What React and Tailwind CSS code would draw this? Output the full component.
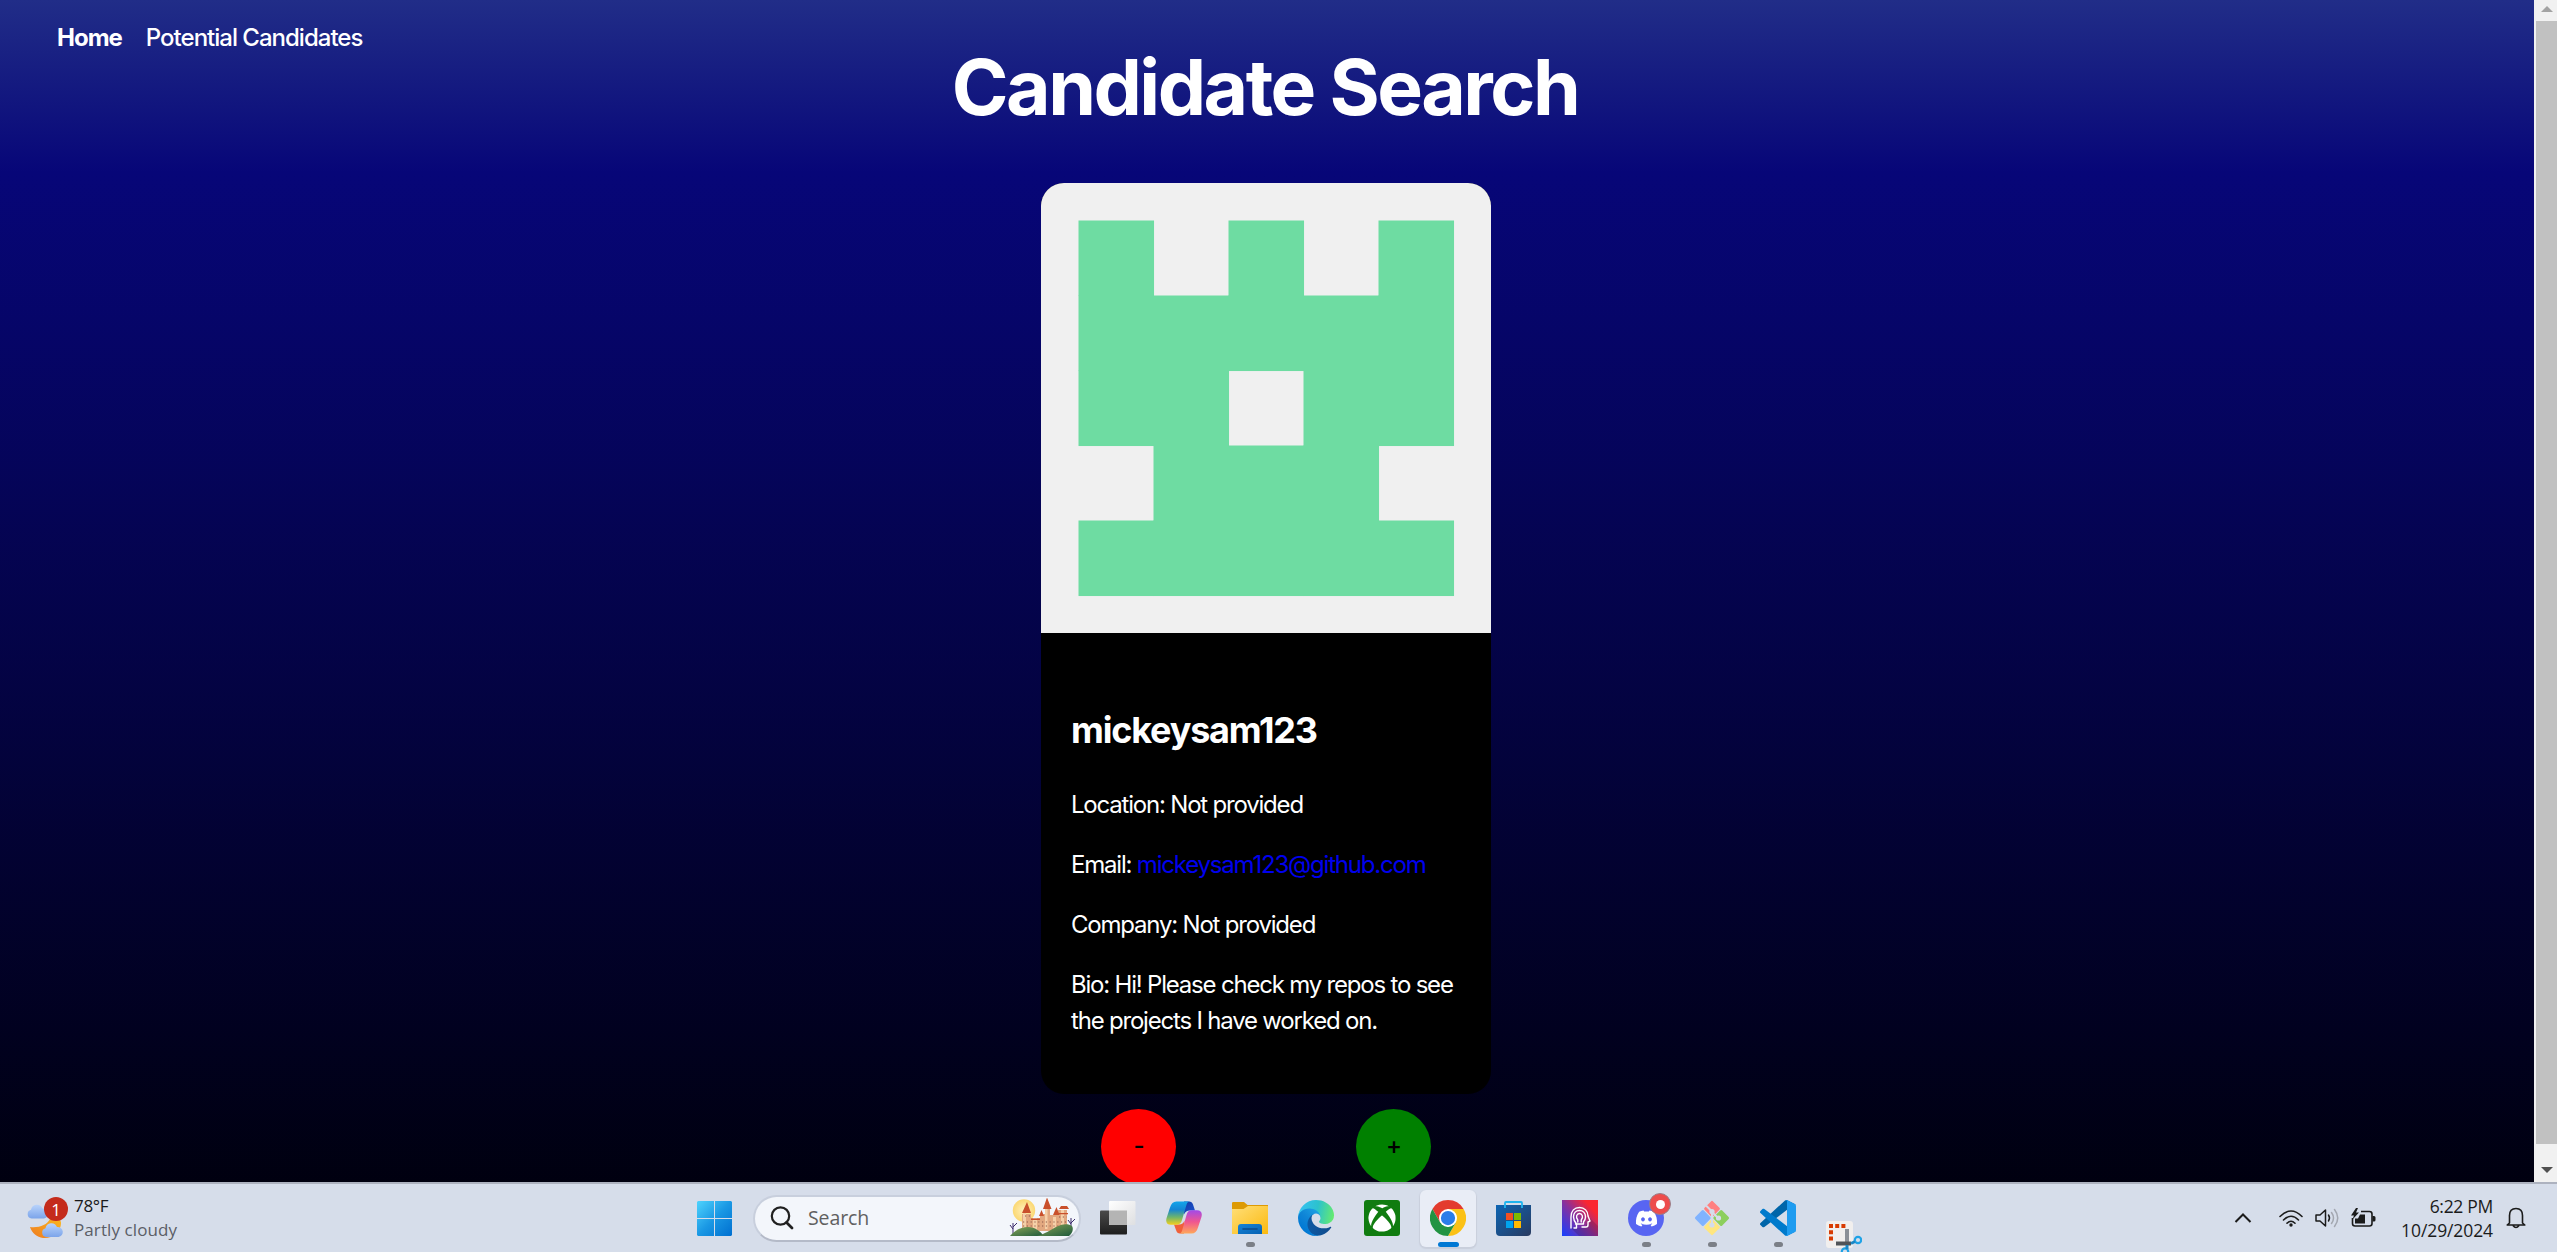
import React from "react";
import { FaXbox, FaDiscord } from "react-icons/fa";

const AVATAR_ROWS = ["10101", "11111", "11011", "01110", "11111"];

function Avatar() {
  return (
    <svg viewBox="0 0 420 420" className="block size-[450px] bg-[#f0f0f0]">
      {AVATAR_ROWS.map((row, y) =>
        [...row].map((c, x) =>
          c === "1" ? (
            <rect key={`${x}${y}`} x={35 + x * 70} y={35 + y * 70} width="70.500" height="70.500" fill="#6edca2" />
          ) : null
        )
      )}
    </svg>
  );
}

function StartIcon() {
  return (
    <svg viewBox="0 0 35 35" className="size-[35px]">
      <defs>
        <linearGradient id="win" x1="0" y1="0" x2="35" y2="35" gradientUnits="userSpaceOnUse">
          <stop offset="0" stopColor="#4fd3fd" />
          <stop offset=".5" stopColor="#1a98e4" />
          <stop offset="1" stopColor="#006fd0" />
        </linearGradient>
      </defs>
      <path fill="url(#win)" d="M1 0H17V17H0V1ZM18 0H34L35 1V17H18ZM0 18H17V35H1L0 34ZM18 18H35V34L34 35H18Z" />
    </svg>
  );
}

function Castle() {
  return (
    <svg viewBox="0 0 66 40" className="h-10 w-[66px]">
      <defs>
        <radialGradient id="sun">
          <stop offset="0" stopColor="#fff0bd" />
          <stop offset="1" stopColor="#fbd873" />
        </radialGradient>
        <linearGradient id="hill" x1="0" y1="0" x2="1" y2="1">
          <stop offset="0" stopColor="#8aa556" />
          <stop offset="1" stopColor="#1e5a3c" />
        </linearGradient>
      </defs>
      <circle cx="15" cy="12.500" r="11.200" fill="url(#sun)" />
      <path fill="#e2a880" d="M13 16h9v4h9v-4h5V10h5v7h8v-5h9v21H13z" />
      <path fill="#f5d0a8" d="M14 14h3v18h-3zM36 11h2.500v20H36zM52 12h3v20h-3zM24 20h4v12h-4zM44 19h3v12h-3z" />
      <path fill="#c9502c" d="M13 15 18 4l4 11zM34 11 38-.500l4.500 11.500zM30 18l2.500-6 2.500 6zM44 17l3.500-8 3 8zM50 11l2-3h6l2 3zM22 20.500h9v1.500h-9zM49 15h10v1.300H49z" />
      <path stroke="#8c5a4a" strokeWidth="1.200" strokeDasharray="1.200 2.600" d="M14 24h44M14 28h44M16 18h5M50 19h8" />
      <path stroke="#3b2a6b" strokeWidth="1" fill="none" d="M4 37V25M4 31 1 27M4 29l4-4M62 31V20M62 26l-3-4M62 25l4-4" />
      <path fill="url(#hill)" d="M1 38c5-6 11-9 18-9 7 0 12 4 16 9z" />
      <path fill="url(#hill)" d="M28 38c8-2 13-6 19-9 5-3 12-4 16-1 2 3 0 8-3 10z" />
    </svg>
  );
}

function TaskView() {
  return (
    <svg viewBox="0 0 36 36" className="size-9">
      <defs>
        <linearGradient id="tvd" x1="0" y1="0" x2="0" y2="1">
          <stop offset="0" stopColor="#4a4a4a" />
          <stop offset="1" stopColor="#1e1e1e" />
        </linearGradient>
        <linearGradient id="tvl" x1="0" y1="0" x2="1" y2="1">
          <stop offset="0" stopColor="#fff" />
          <stop offset="1" stopColor="#dedfe1" />
        </linearGradient>
      </defs>
      <rect x="0" y="10.500" width="27" height="24" rx="1" fill="url(#tvd)" />
      <rect x="9" y="1" width="26.500" height="24" rx="1" fill="url(#tvl)" />
      <path fill="#b4b4b4" d="M9 10.500H27V25H10L9 24Z" />
    </svg>
  );
}

function Copilot() {
  return (
    <svg viewBox="0 0 36 36" className="size-9">
      <defs>
        <linearGradient id="cpa" x1="0" y1="0" x2="0" y2="1">
          <stop offset="0" stopColor="#12a5ea" />
          <stop offset=".35" stopColor="#1585d4" />
          <stop offset=".68" stopColor="#6fb56b" />
          <stop offset="1" stopColor="#f4cf1c" />
        </linearGradient>
        <linearGradient id="cpb" x1="0" y1="0" x2="0" y2="1">
          <stop offset="0" stopColor="#a24ae8" />
          <stop offset=".5" stopColor="#f0568f" />
          <stop offset="1" stopColor="#ffa75a" />
        </linearGradient>
        <linearGradient id="cpc" x1="0" y1="0" x2="1" y2="1">
          <stop offset="0" stopColor="#123aa5" />
          <stop offset="1" stopColor="#1c54d2" />
        </linearGradient>
      </defs>
      <path fill="url(#cpc)" d="M18 1.500h5c2 0 3.400 1 4 3l2 6h-5c-3 0-5 1.500-6 4z" />
      <path fill="#f0603a" d="M18 33.500h-4c-2 0-3.300-1-4-3.500l-2-5.500h5c3 0 4.500-1.500 5.500-4z" />
      <path fill="url(#cpa)" d="M10.500 1.500H24c-1.800 0-2.800 1-3.500 3.300L16 20c-1 3.300-2.600 4.700-5.500 4.700H5c-4 0-5.500-2.500-4.500-6.500L4 7.500C5.200 3.500 7.200 1.500 10.500 1.500Z" />
      <path fill="url(#cpb)" d="M25.500 33.500H13c1.800 0 2.500-1 3.200-3.300L20.500 15c1-3.300 2.600-4.700 5.500-4.700h5c4 0 5.500 2.500 4.500 6.500L32 27.500c-1.200 4-3.200 6-6.500 6Z" />
    </svg>
  );
}

function Explorer() {
  return (
    <svg viewBox="0 0 36 36" className="size-9">
      <defs>
        <linearGradient id="fo" x1="0" y1="0" x2="1" y2="1">
          <stop offset="0" stopColor="#ffdf79" />
          <stop offset="1" stopColor="#fbb90e" />
        </linearGradient>
        <linearGradient id="fb" x1="0" y1="0" x2="1" y2="1">
          <stop offset="0" stopColor="#1683d8" />
          <stop offset="1" stopColor="#0762b3" />
        </linearGradient>
      </defs>
      <path fill="#dd9a04" d="M0 3.200Q0 2 1.200 2H12l3.500 3H36v5H0Z" />
      <path fill="url(#fo)" d="M0 9h11.500L16 6h19.500l.5.500V34H0Z" />
      <path fill="url(#fb)" d="M6 34v-7q0-3 3-3h18q3 0 3 3v7Z" />
      <path stroke="#0b4a8c" strokeWidth="1.600" strokeLinecap="round" d="M11 29h14" />
    </svg>
  );
}

function Edge() {
  return (
    <svg viewBox="0 0 256 256" className="size-9">
      <defs>
        <linearGradient id="e1" x1="63" y1="177" x2="241" y2="177" gradientUnits="userSpaceOnUse">
          <stop offset="0" stopColor="#0c59a4" />
          <stop offset="1" stopColor="#114a8b" />
        </linearGradient>
        <linearGradient id="e2" x1="157" y1="101" x2="46" y2="222" gradientUnits="userSpaceOnUse">
          <stop offset="0" stopColor="#1b9de2" />
          <stop offset=".5" stopColor="#0f85d6" />
          <stop offset="1" stopColor="#0078d4" />
        </linearGradient>
        <linearGradient id="e3" x1="10" y1="60" x2="256" y2="110" gradientUnits="userSpaceOnUse">
          <stop offset="0" stopColor="#35c1f1" />
          <stop offset=".5" stopColor="#2cc2cd" />
          <stop offset="1" stopColor="#66eb6e" />
        </linearGradient>
      </defs>
      <path fill="url(#e1)" d="M231.070 190.540a93.400 93.400 0 0 1-10.540 4.710 101.870 101.870 0 0 1-35.900 6.460c-47.320 0-88.540-32.550-88.540-74.320A31.480 31.480 0 0 1 112.560 99.780c-42.800 1.800-53.800 46.400-53.800 72.530 0 73.880 68.090 81.370 82.760 81.370 7.910 0 19.840-2.300 27-4.560l1.310-.44a128.340 128.340 0 0 0 66.600-52.800 4 4 0 0 0-5.360-5.340z" />
      <path fill="url(#e2)" d="M105.730 241.420a79.200 79.200 0 0 1-22.740-21.340 80.720 80.720 0 0 1 29.530-120.350c3.120-1.470 8.450-4.130 15.540-4a32.350 32.350 0 0 1 25.690 13 31.880 31.880 0 0 1 6.360 18.660c0-.21 24.460-79.600-80-79.600-43.900 0-80 41.660-80 78.210a130.150 130.150 0 0 0 12.110 56 128 128 0 0 0 156.380 67.110 75.550 75.550 0 0 1-62.780-8z" />
      <path fill="url(#e3)" d="M152.330 148.860c-.81 1.050-3.300 2.500-3.300 5.660 0 2.610 1.700 5.120 4.720 7.230 14.380 10 41.490 8.680 41.560 8.680a59.560 59.560 0 0 0 30.270-8.350 61.380 61.380 0 0 0 30.430-52.880c.26-22.410-8-37.310-11.340-43.910C223.460 23.840 177.720 0 128 0A128 128 0 0 0 0 126.200c.48-36.540 36.800-66.050 80-66.050 3.500 0 23.460.34 42 10.070 16.340 8.580 24.900 18.940 30.850 29.210 6.180 10.670 7.280 24.150 7.280 29.520 0 5.370-2.730 13.330-7.800 19.910z" />
    </svg>
  );
}

function Xbox() {
  return (
    <span className="flex size-9 items-center justify-center rounded-[3px] bg-[#107c10]">
      <FaXbox className="size-7 text-white" />
    </span>
  );
}

function Chrome() {
  return (
    <svg viewBox="0 0 48 48" className="size-9">
      <path fill="#e33b2e" d="M24 0A24 24 0 0 0 3.215 12L13.600 30 24 12H44.785A24 24 0 0 0 24 0Z" />
      <path fill="#fbc116" d="M44.785 12A24 24 0 0 1 24 48L34.400 30 34.400 18 24 12Z" />
      <path fill="#229342" d="M3.215 12A24 24 0 0 0 24 48L34.392 30 24 36 13.608 30Z" />
      <circle cx="24" cy="24" r="12" fill="#fff" />
      <circle cx="24" cy="24" r="9.500" fill="#2a7de9" />
    </svg>
  );
}

function Store() {
  return (
    <svg viewBox="0 0 36 36" className="size-9">
      <defs>
        <linearGradient id="st" x1="0" y1="0" x2="1" y2="1">
          <stop offset="0" stopColor="#0d65b3" />
          <stop offset="1" stopColor="#293a60" />
        </linearGradient>
      </defs>
      <path fill="url(#st)" d="M0 5h35v27q0 4-4 4H4q-4 0-4-4Z" />
      <path fill="none" stroke="#1fb4ee" strokeWidth="1.800" d="M9 8V3q0-1 1-1h15q1 0 1 1v5" />
      <path fill="#f25022" d="M10 13h7v7h-7z" />
      <path fill="#7fba00" d="M18 13h7v7h-7z" />
      <path fill="#00a4ef" d="M10 21h7v7h-7z" />
      <path fill="#ffb900" d="M18 21h7v7h-7z" />
    </svg>
  );
}

function HeadApp() {
  return (
    <svg viewBox="0 0 36 36" className="size-9">
      <defs>
        <linearGradient id="ha" x1="0" y1="36" x2="36" y2="4" gradientUnits="userSpaceOnUse">
          <stop offset="0" stopColor="#1440ff" />
          <stop offset=".5" stopColor="#8a2f9c" />
          <stop offset=".85" stopColor="#fb2630" />
        </linearGradient>
      </defs>
      <path fill="url(#ha)" d="M0 0h36v36H0z" />
      <path fill="#000" opacity=".14" d="M9 28 17 36h19V26l-9-9-4 11z" />
      <g fill="none" stroke="#fff" strokeWidth="1.400" strokeLinejoin="round" strokeLinecap="round">
        <path d="M9 28V17C9 11 12.500 7.500 17.500 7.500S26 11 26 16l2 5-2 1v3q0 2-2 2h-4" />
        <path d="M12 28h2.500v-4C12 21 11.500 18.500 11.500 17c0-4 2.500-6.500 6-6.500s6 2.500 6 6.500c0 2-.800 3.500-2 5v2h-8" />
        <path d="M15.800 22v-2c-2.500-3-1-6.500 1.700-6.500s4.200 3.500 1.700 6.500v2" />
      </g>
    </svg>
  );
}

function Discord() {
  return (
    <span className="relative flex size-9 items-center justify-center rounded-full bg-[#5865f2]">
      <FaDiscord className="size-[23px] text-white" />
      <span className="absolute -top-[7px] left-[21px] flex size-[22px] items-center justify-center rounded-full border border-[#9a7f8a] bg-[#ed4d4d]">
        <span className="size-[9px] rounded-full bg-white" />
      </span>
    </span>
  );
}

function Git() {
  return (
    <svg viewBox="0 0 36 36" className="size-9">
      <g transform="rotate(45 18 18)">
        <rect x="5.500" y="5.500" width="12" height="12" rx="1.500" fill="#ff8080" />
        <rect x="18.500" y="5.500" width="12" height="12" rx="1.500" fill="#8ccf5d" />
        <rect x="5.500" y="18.500" width="12" height="12" rx="1.500" fill="#80b3ff" />
        <rect x="18.500" y="18.500" width="12" height="12" rx="1.500" fill="#ffe680" />
      </g>
      <path d="M12 5.500 18 11.500V25M18 12l6 6" stroke="#d5dce9" strokeWidth="2" fill="none" />
      <circle cx="18" cy="11.500" r="2.600" fill="#d5dce9" />
      <circle cx="18" cy="25" r="2.600" fill="#d5dce9" />
      <circle cx="24.500" cy="18" r="2.600" fill="#d5dce9" />
    </svg>
  );
}

function VsCode() {
  return (
    <svg viewBox="0 0 100 100" className="size-9">
      <path fill="#0065a9" d="M96.461 10.796 75.857.876C73.472-.273 70.622.212 68.750 2.083L1.299 63.583c-1.815 1.654-1.812 4.511.004 6.162l5.510 5.009c1.485 1.350 3.722 1.450 5.321.237L93.361 13.370C96.086 11.303 100 13.246 100 16.667v-.24c0-2.400-1.375-4.589-3.539-5.631Z" />
      <path fill="#007acc" d="m96.461 89.204-20.604 9.920c-2.385 1.149-5.235.664-7.107-1.207L1.299 36.417c-1.815-1.654-1.812-4.511.004-6.162l5.510-5.009c1.485-1.350 3.722-1.450 5.321-.237L93.361 86.630C96.086 88.697 100 86.754 100 83.333v.24c0 2.400-1.375 4.589-3.539 5.631Z" />
      <path fill="#1f9cf0" d="M75.858 99.126c-2.386 1.148-5.236.662-7.108-1.210C71.056 100.223 75 98.590 75 95.328V4.672c0-3.262-3.944-4.895-6.250-2.589C70.622.211 73.472-.274 75.858.874l20.600 9.907C98.623 11.822 100 14.011 100 16.413v67.174c0 2.402-1.377 4.592-3.541 5.633l-20.601 9.906Z" />
    </svg>
  );
}

function Snip() {
  return (
    <svg viewBox="0 0 36 31" className="h-[31px] w-9">
      <rect x="0" y="0" width="27" height="27" rx="3" fill="#f1efee" />
      <path fill="none" stroke="#d83b01" strokeWidth="4" strokeDasharray="4 2.200" d="M3 5H20" />
      <path fill="none" stroke="#d83b01" strokeWidth="4" strokeDasharray="4 2.200" d="M5 9.200V20" />
      <path stroke="#8b9097" strokeWidth="4" d="M21 8V22" />
      <path stroke="#505459" strokeWidth="4" d="M10 22.500H25" />
      <circle cx="32" cy="19" r="3.200" fill="none" stroke="#1fa2e6" strokeWidth="2.200" />
      <circle cx="19" cy="30.500" r="3.200" fill="none" stroke="#1fa2e6" strokeWidth="2.200" />
      <path stroke="#1b86c4" strokeWidth="3" d="M25 22.500l4-2M21 24v4" />
    </svg>
  );
}

const APPS = [
  { icon: TaskView },
  { icon: Copilot },
  { icon: Explorer, mark: "open" },
  { icon: Edge },
  { icon: Xbox },
  { icon: Chrome, mark: "active" },
  { icon: Store },
  { icon: HeadApp },
  { icon: Discord, mark: "open" },
  { icon: Git, mark: "open" },
  { icon: VsCode, mark: "open" },
];

function AppButton({ icon: Icon, mark }) {
  return (
    <div className="flex w-[66px] shrink-0 justify-center">
      <div
        className={
          mark === "active"
            ? "relative flex h-[57px] w-14 items-center justify-center rounded-md bg-[#e9edf6] shadow-[0_1px_1px_1px_#c9cfdc]"
            : "relative flex h-[57px] w-14 items-center justify-center"
        }
      >
        <Icon />
        {mark === "active" && <span className="absolute bottom-0 h-[5px] w-[21px] rounded-full bg-[#0078d4]" />}
        {mark === "open" && <span className="absolute bottom-0 h-[5px] w-[9px] rounded-full bg-[#7b7f87]" />}
      </div>
    </div>
  );
}

function CloudPath({ x, y, s }) {
  return (
    <path
      transform={`translate(${x} ${y}) scale(${s})`}
      fill="url(#cl)"
      d="M4.500 14A4.500 4.500 0 0 1 4 5.200 6 6 0 0 1 15.500 4 5 5 0 0 1 17 14Z"
    />
  );
}

function Weather() {
  return (
    <div className="flex w-[697px] items-center pl-[26px]">
      <div className="relative h-[42px] w-12">
        <svg viewBox="0 0 48 42" className="h-[42px] w-12">
          <defs>
            <linearGradient id="cl" x1="0" y1="0" x2="0" y2="1">
              <stop offset="0" stopColor="#b9d3fb" />
              <stop offset="1" stopColor="#7ba4ea" />
            </linearGradient>
            <linearGradient id="mo" x1="0" y1="1" x2="1" y2="0">
              <stop offset="0" stopColor="#ee7a22" />
              <stop offset="1" stopColor="#fbb81c" />
            </linearGradient>
          </defs>
          <CloudPath x={1} y={7.5} s={1} />
          <path fill="url(#mo)" d="M4 30c9 1 17-2 20-8 6-3 11 0 11 4 0 9-9 16-18 15-6-.6-11-5-13-11Z" />
          <CloudPath x={15.5} y={26} s={1} />
        </svg>
        <span className="absolute left-[18px] top-0 flex size-6 items-center justify-center rounded-full bg-[#c42b1c] text-[17px] leading-none text-white">1</span>
      </div>
      <div className="flex flex-col text-[17px] leading-6">
        <span className="tracking-[-0.3px] text-[#1a1a1a]">78°F</span>
        <span className="tracking-[0.1px] text-[#5b5e66]">Partly cloudy</span>
      </div>
    </div>
  );
}

function Tray() {
  return (
    <div className="ml-auto flex items-center pr-[31px] text-[#1b1b1b]">
      <svg viewBox="0 0 18 18" className="mr-[27px] size-[18px]" fill="none" stroke="currentColor" strokeWidth="2">
        <path d="m1.500 13 7.500-7.500 7.500 7.500" />
      </svg>
      <svg viewBox="0 0 24 20" className="mr-3 h-5 w-6" fill="none" stroke="currentColor" strokeWidth="1.600" strokeLinecap="round">
        <path d="M1 8.500Q12-2.500 23 8.500M4.500 12Q12 4.500 19.500 12M8 15.200Q12 11.200 16 15.200" />
        <circle cx="12" cy="17" r="1.700" fill="currentColor" stroke="none" />
      </svg>
      <svg viewBox="0 0 24 20" className="mr-3 h-5 w-6" fill="none" stroke="currentColor" strokeWidth="1.500" strokeLinejoin="round" strokeLinecap="round">
        <path d="M1 7H5L10.500 2V18L5 13H1ZM13.500 7Q15.500 10 13.500 13" />
        <path stroke="#a3a7b0" d="M16.500 4.500Q20.500 10 16.500 15.500M19.500 1.500Q26 10 19.500 18.500" />
      </svg>
      <svg viewBox="0 0 25 20" className="mr-[23px] h-5 w-[25px]" fill="none" stroke="currentColor" strokeWidth="1.600">
        <path d="M10 3.500H18.500Q21 3.500 21 6V15.500Q21 18 18.500 18H4Q1.500 18 1.500 15.500V10" />
        <path fill="currentColor" stroke="none" d="M9 6.500H14V15.500H4V10.500H7ZM21.500 8H23Q24.500 8 24.500 9.500V12Q24.500 13.500 23 13.500H21.500Z" />
        <path fill="currentColor" stroke="none" d="M5 0 0 7.500H3L1.500 11.500 8 4.500H5L7 0Z" />
      </svg>
      <div className="mr-[13px] flex w-[94px] flex-col items-end text-[17.500px] leading-6 tracking-[-0.1px]">
        <span className="tracking-[-0.3px]">6:22 PM</span>
        <span>10/29/2024</span>
      </div>
      <svg viewBox="0 0 20 22" className="h-[22px] w-5" fill="none" stroke="currentColor" strokeWidth="1.600" strokeLinejoin="round">
        <path d="M3.500 16V8.500Q3.500 1.500 10 1.500T16.500 8.500V16L18.800 18H1.200ZM7 18.500Q10 22.500 13 18.500" />
      </svg>
    </div>
  );
}

function Taskbar() {
  return (
    <footer className="flex h-[70px] shrink-0 overflow-hidden border-t-2 border-[#adb2bf] bg-[#d6ddea] font-['Open_Sans','Noto_Sans',sans-serif]">
      <Weather />
      <div className="flex items-center">
        <StartIcon />
        <div className="ml-[21px] mr-1 flex h-[47px] w-[328px] items-center rounded-full border-2 border-[#c8cfdd] border-b-[#b4bac8] bg-[#f3f6fb] pl-[15px] pr-1">
          <svg viewBox="0 0 24 24" className="size-6" fill="none" stroke="#202020" strokeWidth="2.200" strokeLinecap="round">
            <circle cx="10.500" cy="10" r="8.700" />
            <path d="m16.500 16.500 5.500 5.500" strokeWidth="2.800" />
          </svg>
          <span className="ml-[14px] flex-1 text-[19.500px] tracking-[-0.1px] text-[#606060]">Search</span>
          <Castle />
        </div>
        {APPS.map((app, i) => (
          <AppButton key={i} {...app} />
        ))}
        <div className="ml-[15px] self-end">
          <Snip />
        </div>
      </div>
      <Tray />
    </footer>
  );
}

function Scrollbar() {
  return (
    <div className="flex w-[23px] shrink-0 flex-col bg-[#f1f1f1] pl-0.5">
      <div className="flex h-[21px] justify-center pt-[6px]">
        <svg viewBox="0 0 12 6" className="h-1.5 w-3"><path fill="#a3a3a3" d="M6 0 12 6H0Z" /></svg>
      </div>
      <div className="flex-1 bg-[#c1c1c1]" />
      <div className="flex h-[38px] items-end justify-center pb-[9px]">
        <svg viewBox="0 0 12 6" className="h-1.5 w-3"><path fill="#505050" d="M0 0H12L6 6Z" /></svg>
      </div>
    </div>
  );
}

export default function App() {
  return (
    <div className="flex h-[1252px] w-[2557px] flex-col overflow-hidden">
      <div className="flex h-[1182px] overflow-hidden">
        <main className="flex flex-1 flex-col bg-[linear-gradient(180deg,#212d88_0px,#070678_172px,#00000e_1200px)] pr-0.5 font-['Inter',sans-serif] text-2xl leading-9 tracking-[-1.2px] text-white">
          <nav className="flex h-[46px] gap-6 pl-[57px] pt-5 font-medium tracking-[-1px]">
            <a className="font-bold">Home</a>
            <a>Potential Candidates</a>
          </nav>
          <h1 className="self-center whitespace-nowrap pr-0.5 text-[76.800px] font-bold leading-[84.500px] tracking-[-2.500px]">Candidate Search</h1>
          <section className="mt-[52px] h-[911px] w-[450px] shrink-0 self-center overflow-hidden rounded-[23px] bg-black">
            <Avatar />
            <div className="px-[30px] pt-[70px]">
              <h2 className="mb-[30px] text-4xl font-bold leading-[54px]">mickeysam123</h2>
              <div className="flex flex-col gap-6">
                <p>Location: Not provided</p>
                <p>Email: <a className="text-[#0000ee]">mickeysam123@github.com</a></p>
                <p>Company: Not provided</p>
                <p>Bio: Hi! Please check my repos to see the projects I have worked on.</p>
              </div>
            </div>
          </section>
          <div className="mt-[15px] flex shrink-0 gap-[180px] self-center text-2xl font-medium text-black">
            <button className="size-[75px] rounded-full bg-[#ff0000]">-</button>
            <button className="size-[75px] rounded-full bg-[#008000]">+</button>
          </div>
        </main>
        <Scrollbar />
      </div>
      <Taskbar />
    </div>
  );
}
